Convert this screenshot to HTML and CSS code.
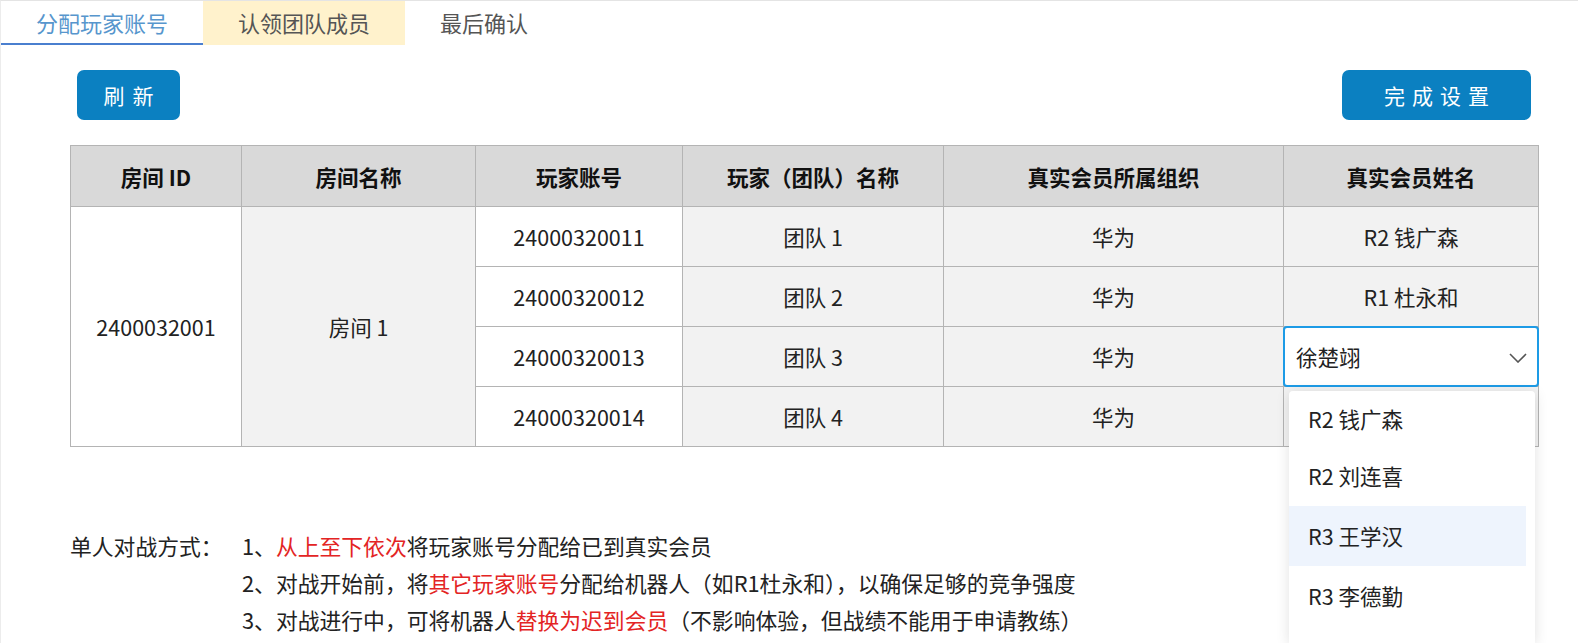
FILE: index.html
```html
<!DOCTYPE html>
<html lang="zh-CN">

<head>
    <meta charset="UTF-8">
    <meta name="viewport" content="width=device-width, initial-scale=1.0">
    <title>认领团队成员</title>
    <link rel="stylesheet" href="styles.css">
</head>

<body>
    <div class="page">
        <nav class="tabs">
            <div class="tab tab-active">分配玩家账号</div>
            <div class="tab tab-current">认领团队成员</div>
            <div class="tab">最后确认</div>
        </nav>
        <main class="content">
            <div class="toolbar">
                <button class="btn btn-refresh">刷新</button>
                <button class="btn btn-finish">完成设置</button>
            </div>
            <table class="assign-table">
                <colgroup>
                    <col class="col-id">
                    <col class="col-room">
                    <col class="col-account">
                    <col class="col-team">
                    <col class="col-org">
                    <col class="col-member">
                </colgroup>
                <thead>
                    <tr>
                        <th>房间 ID</th>
                        <th>房间名称</th>
                        <th>玩家账号</th>
                        <th>玩家（团队）名称</th>
                        <th>真实会员所属组织</th>
                        <th>真实会员姓名</th>
                    </tr>
                </thead>
                <tbody>
                    <tr>
                        <td rowspan="4" class="cell-white">2400032001</td>
                        <td rowspan="4">房间 1</td>
                        <td class="cell-white">24000320011</td>
                        <td>团队 1</td>
                        <td>华为</td>
                        <td>R2 钱广森</td>
                    </tr>
                    <tr>
                        <td class="cell-white">24000320012</td>
                        <td>团队 2</td>
                        <td>华为</td>
                        <td>R1 杜永和</td>
                    </tr>
                    <tr>
                        <td class="cell-white">24000320013</td>
                        <td>团队 3</td>
                        <td>华为</td>
                        <td class="select-cell">
                            <div class="select">
                                <span>徐楚翊</span>
                                <svg class="chevron" width="18" height="10" viewBox="0 0 18 10">
                                    <polyline points="1,1 9,9 17,1" fill="none" stroke="#555" stroke-width="1.6"/>
                                </svg>
                            </div>
                            <ul class="dropdown">
                                <li class="option option-first">R2 钱广森</li>
                                <li class="option">R2 刘连喜</li>
                                <li class="option option-hover">R3 王学汉</li>
                                <li class="option">R3 李德勤</li>
                            </ul>
                        </td>
                    </tr>
                    <tr>
                        <td class="cell-white">24000320014</td>
                        <td>团队 4</td>
                        <td>华为</td>
                        <td></td>
                    </tr>
                </tbody>
            </table>
            <div class="notes">
                <div class="notes-label">单人对战方式：</div>
                <div class="notes-lines">
                    <p>1、<span class="red">从上至下依次</span>将玩家账号分配给已到真实会员</p>
                    <p>2、对战开始前，将<span class="red">其它玩家账号</span>分配给机器人（如R1杜永和），以确保足够的竞争强度</p>
                    <p>3、对战进行中，可将机器人<span class="red">替换为迟到会员</span>（不影响体验，但战绩不能用于申请教练）</p>
                </div>
            </div>
        </main>
    </div>
</body>

</html>
```

FILE: styles.css
```css
html,
body {
    margin: 0;
    height: 100%;
    overflow: hidden;
}

body {
    font-family: "Noto Sans CJK SC", "Noto Sans", sans-serif;
    background-color: white;
    color: #222;
}

.page {
    height: 100%;
    box-sizing: border-box;
    border-top: 1px solid #e4e4e4;
    border-left: 1px solid #ececec;
}

/* onglets */
.tabs {
    display: flex;
    height: 44px;
}

.tab {
    box-sizing: border-box;
    height: 44px;
    padding: 0 35px;
    display: flex;
    align-items: center;
    font-size: 22px;
    color: #555;
    border-bottom: 2px solid transparent;
}

.tab-active {
    color: #5796cd;
    border-bottom-color: #4a7fcf;
    padding-left: 35px;
}

.tab-current {
    background-color: #fff2cc;
}

.content {
    padding: 0 40px 0 69px;
}

.toolbar {
    display: flex;
    justify-content: space-between;
    padding: 0 7px;
    margin-top: 25px;
}

.btn {
    height: 50px;
    border: none;
    border-radius: 7px;
    background-color: #0b80c1;
    color: white;
    font-family: inherit;
    font-size: 21px;
    cursor: pointer;
}

.btn-refresh {
    width: 103px;
    letter-spacing: 8px;
    padding: 0 0 0 8px;
}

.btn-finish {
    width: 189px;
    letter-spacing: 7px;
    padding: 0 0 0 7px;
}

/* tableau */
.assign-table {
    width: 1468px;
    margin-top: 25px;
    border-collapse: collapse;
    table-layout: fixed;
    font-size: 21.5px;
}

.col-id { width: 171px; }
.col-room { width: 234px; }
.col-account { width: 207px; }
.col-team { width: 261px; }
.col-org { width: 340px; }
.col-member { width: 255px; }

.assign-table th,
.assign-table td {
    border: 1px solid #b4b4b4;
    text-align: center;
    padding: 0;
}

.assign-table th {
    height: 60px;
    background-color: #d9d9d9;
    color: #111;
    font-weight: bold;
}

.assign-table td {
    height: 59px;
    background-color: #f2f2f2;
}

.assign-table td.cell-white {
    background-color: white;
}

.select-cell {
    position: relative;
}

.select {
    box-sizing: border-box;
    height: 61px;
    margin: -1px;
    border: 2px solid #1d9be6;
    border-radius: 4px;
    background-color: white;
    display: flex;
    align-items: center;
    justify-content: space-between;
    padding: 0 10px 0 11px;
    text-align: left;
}

.chevron {
    margin-top: 2px;
}

.dropdown {
    position: absolute;
    top: 64px;
    left: 5px;
    width: 246px;
    height: 252px;
    margin: 0;
    padding: 0;
    list-style: none;
    background-color: white;
    border-radius: 4px 4px 0 0;
    box-shadow: 0 2px 14px rgba(0, 0, 0, 0.12);
    overflow: hidden;
    z-index: 2;
    text-align: left;
}

.option {
    height: 60px;
    line-height: 60px;
    padding-left: 19px;
    margin-right: 9px;
    color: #222;
}

.option-first {
    height: 55px;
    line-height: 55px;
}

.option-hover {
    background-color: #eef4fd;
}

/* consignes */
.notes {
    display: flex;
    margin-top: 80px;
    font-size: 21.8px;
    color: #222;
}

.notes-label {
    width: 172px;
    flex-shrink: 0;
    line-height: 37px;
}

.notes-lines p {
    margin: 0;
    line-height: 37px;
    white-space: nowrap;
}

.red {
    color: #e32424;
}
```
